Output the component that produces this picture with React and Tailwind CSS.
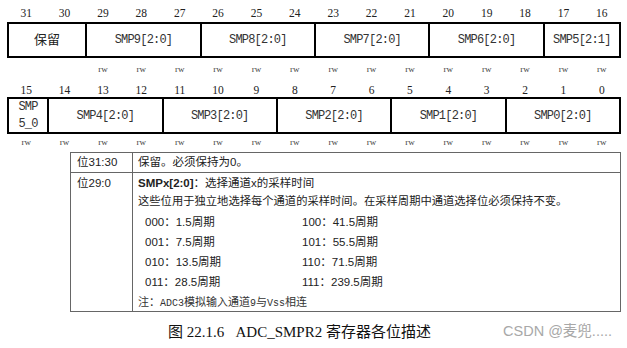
const TOP_BITS = [31, 30, 29, 28, 27, 26, 25, 24, 23, 22, 21, 20, 19, 18, 17, 16];
const LOW_BITS = [15, 14, 13, 12, 11, 10, 9, 8, 7, 6, 5, 4, 3, 2, 1, 0];

const TOP_FIELDS = [
  { label: "保留", span: "col-span-2", cjk: true, rw: false },
  { label: "SMP9[2:0]", span: "col-span-3", rw: true },
  { label: "SMP8[2:0]", span: "col-span-3", rw: true },
  { label: "SMP7[2:0]", span: "col-span-3", rw: true },
  { label: "SMP6[2:0]", span: "col-span-3", rw: true },
  { label: "SMP5[2:1]", span: "col-span-2", rw: true },
];

const LOW_FIELDS = [
  { label: "SMP5_0", span: "col-span-1", split: true },
  { label: "SMP4[2:0]", span: "col-span-3" },
  { label: "SMP3[2:0]", span: "col-span-3" },
  { label: "SMP2[2:0]", span: "col-span-3" },
  { label: "SMP1[2:0]", span: "col-span-3" },
  { label: "SMP0[2:0]", span: "col-span-3" },
];

const CYCLES = [
  ["000", "1.5周期", "100", "41.5周期"],
  ["001", "7.5周期", "101", "55.5周期"],
  ["010", "13.5周期", "110", "71.5周期"],
  ["011", "28.5周期", "111", "239.5周期"],
];

const serif = "font-['Liberation_Serif','Noto_Sans_CJK_SC',serif]";
const mono = "font-['Liberation_Mono','Noto_Sans_CJK_SC',monospace]";
const sans = "font-['Liberation_Sans','Noto_Sans_CJK_SC',sans-serif]";

function BitNumbers({ bits, height }) {
  return (
    <div className={`grid grid-cols-16 ${height} items-center ${serif} text-[11.5px] text-[#222]`}>
      {bits.map((b) => (
        <span key={b} className="text-center">
          {b}
        </span>
      ))}
    </div>
  );
}

function RwRow({ fields, height }) {
  // one "rw" under every bit that belongs to a read/write field
  const cells = [];
  fields.forEach((f, i) => {
    const n = Number(f.span.replace("col-span-", ""));
    for (let k = 0; k < n; k++) cells.push(f.rw !== false ? `rw-${i}-${k}` : null);
  });
  return (
    <div className={`grid grid-cols-16 ${height} items-center ${serif} text-[9px] text-[#444]`}>
      {cells.map((c, i) => (
        <span key={i} className="text-center">
          {c ? "rw" : ""}
        </span>
      ))}
    </div>
  );
}

function FieldBox({ fields, height }) {
  return (
    <div className={`grid grid-cols-16 ${height} border-2 border-black`}>
      {fields.map((f, i) => (
        <div
          key={f.label}
          className={`${f.span} flex items-center justify-center ${i > 0 ? "border-l-2 border-black" : ""}`}
        >
          {f.split ? (
            <div className={`${mono} text-[12px] tracking-[-0.8px] leading-[17px] text-[#333] text-center`}>
              <div>SMP</div>
              <div>5_0</div>
            </div>
          ) : f.cjk ? (
            <span className={`${sans} text-[13px] text-[#222]`}>{f.label}</span>
          ) : (
            <span className={`${mono} text-[12px] tracking-[-0.8px] text-[#333]`}>{f.label}</span>
          )}
        </div>
      ))}
    </div>
  );
}

export default function App() {
  return (
    <div className="w-[627px] h-[348px] bg-white overflow-hidden">
      {/* register bit map */}
      <div className="ml-[7px] w-[614px] pt-[5px]">
        <BitNumbers bits={TOP_BITS} height="h-[17px]" />
        <FieldBox fields={TOP_FIELDS} height="h-[36px]" />
        <RwRow fields={TOP_FIELDS} height="h-[24px]" />
        <BitNumbers bits={LOW_BITS} height="h-[15px]" />
        <FieldBox fields={LOW_FIELDS} height="h-[37px]" />
        <RwRow fields={LOW_FIELDS.map((f) => ({ ...f, rw: true }))} height="h-[18px]" />
      </div>

      {/* bit description table */}
      <div className={`ml-[70px] w-[551px] border border-[#666] ${sans} text-[11.5px] text-[#222]`}>
        <div className="flex h-[20px] border-b border-[#666]">
          <div className="w-[62px] shrink-0 border-r border-[#666] pl-[6px] flex items-center">位31:30</div>
          <div className="pl-[5px] flex items-center">保留。必须保持为0。</div>
        </div>
        <div className="flex h-[138px]">
          <div className="w-[62px] shrink-0 border-r border-[#666] pl-[6px] pt-[1px] leading-[18px]">位29:0</div>
          <div className="pl-[5px] pt-[1px] flex flex-col">
            <div className="leading-[18px]">
              <span className="font-bold">SMPx[2:0]</span>：选择通道x的采样时间
            </div>
            <div className="leading-[18px] text-[11.3px]">
              这些位用于独立地选择每个通道的采样时间。在采样周期中通道选择位必须保持不变。
            </div>
            <div className="mt-[2px] pl-[7px] flex flex-col">
              {CYCLES.map(([a, av, b, bv]) => (
                <div key={a} className="flex leading-[20px]">
                  <span className="w-[157px]">
                    {a}：{av}
                  </span>
                  <span>
                    {b}：{bv}
                  </span>
                </div>
              ))}
            </div>
            <div className="leading-[20px] text-[11px] text-[#333]">
              注：<span className={mono + " text-[10px]"}>ADC3</span>模拟输入通道
              <span className={mono + " text-[10px]"}>9</span>与
              <span className={mono + " text-[10px]"}>Vss</span>相连
            </div>
          </div>
        </div>
      </div>

      {/* caption */}
      <div className="flex items-center h-[36px] pt-[4px]">
        <span className={`ml-[168px] whitespace-pre ${serif} text-[15px] text-[#111]`}>
          图 22.1.6{"   "}ADC_SMPR2 寄存器各位描述
        </span>
        <span className={`ml-auto mr-[15px] ${sans} text-[14.5px] text-[#a8a8a8]`}>CSDN @麦兜.....</span>
      </div>
    </div>
  );
}
